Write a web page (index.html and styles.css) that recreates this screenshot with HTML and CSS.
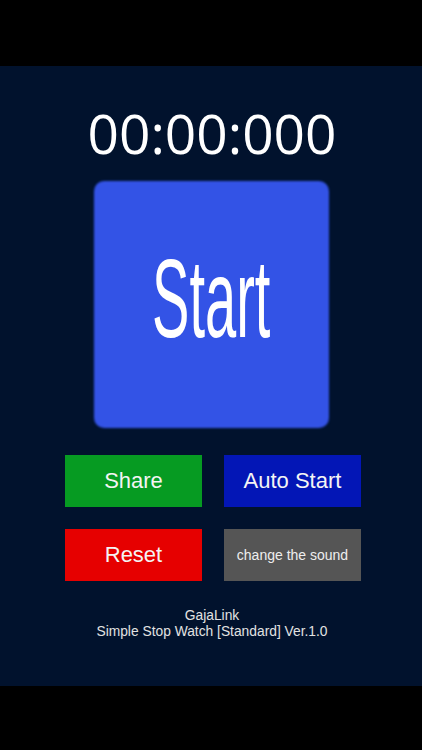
FILE: index.html
```html
<!DOCTYPE html>
<html lang="en">
<head>
<meta charset="utf-8">
<title>Simple Stop Watch</title>
<link rel="stylesheet" href="styles.css">
</head>
<body>
<div class="bar-top"></div>
<main class="screen">
  <div class="timer">00:00:000</div>
  <button class="start"><span class="start-label">Start</span></button>
  <div class="grid">
    <button class="btn share">Share</button>
    <button class="btn auto">Auto Start</button>
    <button class="btn reset">Reset</button>
    <button class="btn sound">change the sound</button>
  </div>
  <footer class="footer">
    <div>GajaLink</div>
    <div>Simple Stop Watch [Standard] Ver.1.0</div>
  </footer>
</main>
<div class="bar-bottom"></div>
</body>
</html>
```

FILE: styles.css
```css
html, body {
  margin: 0;
  padding: 0;
  background: #000;
  width: 422px;
  height: 750px;
  overflow: hidden;
}

.bar-top {
  height: 66px;
  background: #000;
}

.bar-bottom {
  height: 64px;
  background: #000;
}

.screen {
  height: 620px;
  background: #01122d;
  display: flex;
  flex-direction: column;
  align-items: center;
  box-sizing: border-box;
  padding-top: 35px;
  font-family: "Liberation Sans", Arial, sans-serif;
}

.timer {
  font-family: "Open Sans", sans-serif;
  font-size: 55px;
  line-height: 64px;
  color: #ffffff;
  margin-left: 2px;
}

.start {
  position: relative;
  margin-top: 16px;
  width: 235px;
  height: 247px;
  border: 0;
  outline: none;
  background: transparent;
  display: flex;
  align-items: center;
  justify-content: center;
  padding: 0 0 10px 0;
  font-family: "Liberation Sans", Arial, sans-serif;
}

.start::before {
  content: "";
  position: absolute;
  inset: 0;
  border-radius: 10px;
  background: #3353e6;
  filter: blur(1px);
}

.start-label {
  position: relative;
  display: inline-block;
  font-size: 111px;
  line-height: 111px;
  color: #ffffff;
  transform: scaleX(0.505);
}

.grid {
  margin-top: 27px;
  display: grid;
  grid-template-columns: 137px 137px;
  column-gap: 22px;
  row-gap: 22px;
  padding-left: 4px;
}

.btn {
  width: 137px;
  height: 52px;
  border: none;
  border-radius: 0;
  padding: 0;
  color: #f4f4f4;
  font-family: "Liberation Sans", Arial, sans-serif;
  font-size: 22px;
}

.share { background: #069b22; }
.auto { background: #0316b6; }
.reset { background: #e60000; }
.sound {
  background: #555555;
  font-size: 14px;
  color: #eeeeee;
}

.footer {
  margin-top: 27px;
  color: #e2e2e2;
  font-size: 13.8px;
  line-height: 16px;
  text-align: center;
  padding-left: 2px;
}
```
